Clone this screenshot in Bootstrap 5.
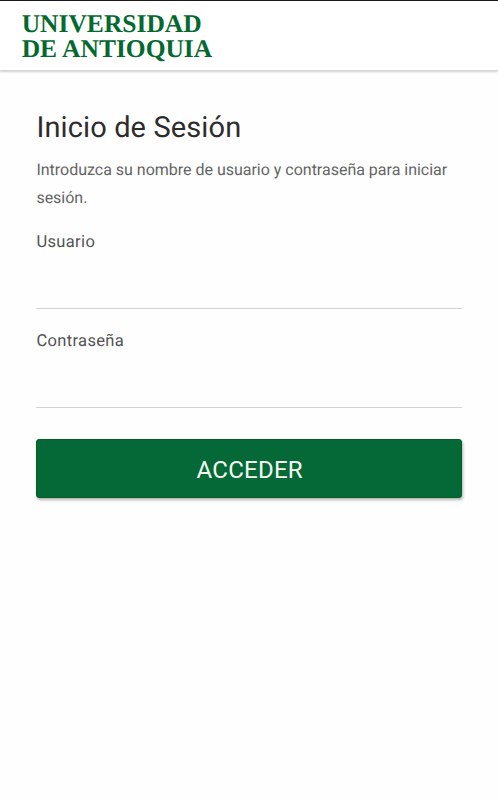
<!DOCTYPE html>
<html lang="es">
<head>
<meta charset="utf-8">
<meta name="viewport" content="width=device-width, initial-scale=1">
<title>Inicio de Sesión</title>
<link rel="stylesheet" href="https://cdn.jsdelivr.net/npm/bootstrap@5.3.0/dist/css/bootstrap.min.css">
<style>
body{font-family:Roboto,"Open Sans",sans-serif;background:#fefefe;color:#525252;min-height:800px;text-rendering:geometricPrecision}
.site-header{height:71px;background:#fff;border-top:1px solid #1a181b;box-shadow:0 1px 2px rgba(0,0,0,.18);border-bottom:1px solid #d6d6d6}
.brand-mark{display:block}
.brand-mark text{font-family:"Liberation Serif",serif;font-weight:700;fill:#04692f}
.login{padding:38px 36px 0 36.4px}
.title{font-size:29px;line-height:38px;font-weight:400;letter-spacing:.12px;color:#2c2c2c;margin:0 0 9px}
.intro{font-size:16px;line-height:27.5px;letter-spacing:-.01px;color:#646464;margin:0 0 19px}
.form-label{font-size:16.5px;line-height:26px;letter-spacing:.35px;margin:0;height:26px}
.line-input{height:53px;border:0;border-bottom:1px solid #d3d3d3;border-radius:0;background:transparent;padding:0}
.field{margin-bottom:20px}
.field-last{margin-bottom:31px}
.btn-enter{height:59px;background:#046937;border:1px solid #045f22;border-radius:3px;color:#f5faf0;font-size:24px;line-height:1;letter-spacing:.25px;box-shadow:1px 2px 3px rgba(0,0,0,.3);padding:2px 0 0 1px}
</style>
<script src="https://cdn.jsdelivr.net/npm/bootstrap@5.3.0/dist/js/bootstrap.bundle.min.js"></script>
</head>
<body>
<header class="site-header">
<svg class="brand-mark" width="230" height="68" role="img" aria-label="Universidad de Antioquia">
<text x="21.7" y="31" font-size="25.5" textLength="180" lengthAdjust="spacingAndGlyphs">UNIVERSIDAD</text>
<text x="21.7" y="55.5" font-size="25.5" textLength="190.5" lengthAdjust="spacingAndGlyphs">DE ANTIOQUIA</text>
</svg>
</header>
<main class="login">
<h1 class="title">Inicio de Sesión</h1>
<p class="intro">Introduzca su nombre de usuario y contraseña para iniciar sesión.</p>
<form>
<div class="field">
<label class="form-label d-block" for="user">Usuario</label>
<input class="form-control line-input" id="user" type="text">
</div>
<div class="field-last">
<label class="form-label d-block" for="pass">Contraseña</label>
<input class="form-control line-input" id="pass" type="password">
</div>
<button class="btn btn-enter w-100 d-flex align-items-center justify-content-center" type="button">ACCEDER</button>
</form>
</main>
</body>
</html>
